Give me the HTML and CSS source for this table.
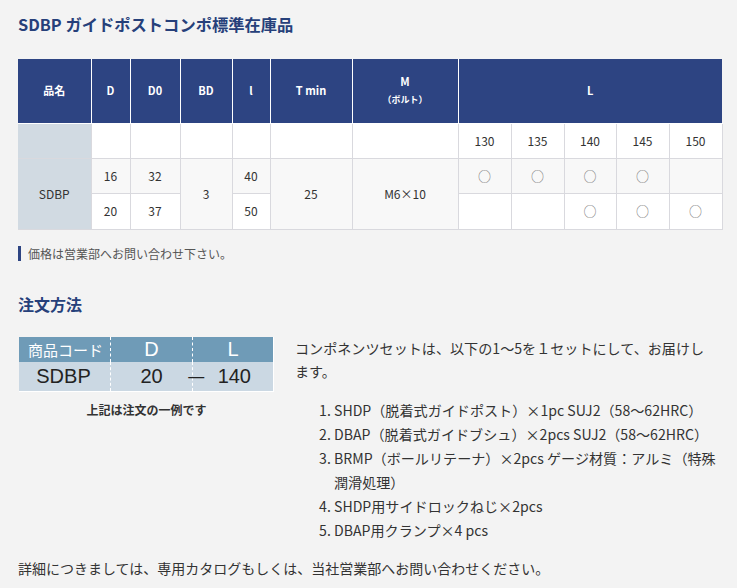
FILE: index.html
```html
<!DOCTYPE html>
<html lang="ja">
<head>
<meta charset="utf-8">
<link rel="stylesheet" href="styles.css">
</head>
<body>
<div class="page">
  <h1 class="title">SDBP ガイドポストコンポ標準在庫品</h1>
  <table class="stock">
    <colgroup>
      <col class="c73"><col class="c39"><col class="c50"><col class="c52"><col class="c38"><col class="c82"><col class="c106">
      <col class="c53"><col class="c53"><col class="c52"><col class="c53"><col class="c53">
    </colgroup>
    <tr class="head">
      <th>品名</th><th>D</th><th>D0</th><th>BD</th><th>l</th><th>T min</th>
      <th>M<br><span class="sub">（ボルト）</span></th>
      <th colspan="5">L</th>
    </tr>
    <tr class="r2">
      <td class="name"></td><td></td><td></td><td></td><td></td><td></td><td></td>
      <td>130</td><td>135</td><td>140</td><td>145</td><td>150</td>
    </tr>
    <tr class="r3">
      <td class="name" rowspan="2">SDBP</td><td>16</td><td>32</td><td rowspan="2" class="grey">3</td><td>40</td>
      <td rowspan="2" class="grey">25</td><td rowspan="2" class="grey">M6×10</td>
      <td class="mk">○</td><td class="mk">○</td><td class="mk">○</td><td class="mk">○</td><td></td>
    </tr>
    <tr class="r4">
      <td>20</td><td>37</td><td>50</td>
      <td></td><td></td><td class="mk">○</td><td class="mk">○</td><td class="mk">○</td>
    </tr>
  </table>
  <p class="note">価格は営業部へお問い合わせ下さい。</p>

  <h2 class="heading">注文方法</h2>
  <div class="order">
    <div class="order-left">
      <div class="codebox">
        <div class="cb-row cb-head">
          <div class="cb-cell cb-c1 jp">商品コード</div>
          <div class="cb-cell cb-c2">D</div>
          <div class="cb-cell cb-c3">L</div>
        </div>
        <div class="cb-row cb-body">
          <div class="cb-cell cb-c1">SDBP</div>
          <div class="cb-cell cb-c2">20</div>
          <div class="cb-cell cb-c3"><span class="dash">—</span><span class="len">140</span></div>
        </div>
      </div>
      <p class="caption">上記は注文の一例です</p>
    </div>
    <div class="order-right">
      <p class="lead">コンポネンツセットは、以下の1〜5を１セットにして、お届けします。</p>
      <ol class="items">
        <li>SHDP（脱着式ガイドポスト）×1pc SUJ2（58〜62HRC）</li>
        <li>DBAP（脱着式ガイドブシュ）×2pcs SUJ2（58〜62HRC）</li>
        <li>BRMP（ボールリテーナ）×2pcs ゲージ材質：アルミ（特殊潤滑処理）</li>
        <li>SHDP用サイドロックねじ×2pcs</li>
        <li>DBAP用クランプ×4 pcs</li>
      </ol>
    </div>
  </div>
  <p class="footer">詳細につきましては、専用カタログもしくは、当社営業部へお問い合わせください。</p>
</div>
</body>
</html>
```
FILE: styles.css
```css
* { box-sizing: border-box; }
html, body { margin: 0; padding: 0; }
body {
  background: #f3f3f3;
  font-family: "Noto Sans CJK JP", "Noto Sans", sans-serif;
  color: #333;
}
.page {
  padding: 12px 15px 0 18px;
  width: 737px;
}
.title {
  margin: 0 0 22px;
  font-size: 16.3px;
  line-height: 25px;
  font-weight: 700;
  color: #26407a;
}
.stock {
  width: 704px;
  table-layout: fixed;
  border-collapse: collapse;
  font-size: 12px;
  color: #333;
}
.c73 { width: 73px; } .c39 { width: 39px; } .c50 { width: 50px; } .c52 { width: 52px; }
.c38 { width: 38px; } .c82 { width: 82px; } .c106 { width: 106px; } .c53 { width: 53px; }
.stock th {
  background: #2d4482;
  color: #fff;
  font-size: 11px;
  font-weight: 700;
  line-height: 17px;
  padding: 0;
  border: 1px solid #fff;
  border-top: 0;
}
.stock th:first-child { border-left: 0; }
.stock th:last-child { border-right: 0; }
.stock .sub { font-size: 9px; }
.stock .head { height: 64px; }
.stock td {
  border: 1px solid #d9d9de;
  text-align: center;
  padding: 0;
  background: #fff;
  line-height: 16px;
}
.stock .r2 { height: 35px; }
.stock .r3 { height: 35px; }
.stock .r4 { height: 36px; }
.stock .r3 td { background: #f8f8f8; }
.stock td.grey { background: #f8f8f8; }
.stock td.name { background: #d1dae2; border-left: 0; }
.stock td.mk { color: #777; font-size: 13px; }
.note {
  margin: 16px 0 0;
  border-left: 3px solid #2d4482;
  padding-left: 7px;
  font-size: 12px;
  line-height: 15px;
  color: #555;
}
.heading {
  margin: 31px 0 0;
  font-size: 16px;
  line-height: 24px;
  font-weight: 700;
  color: #26407a;
}
.order {
  display: flex;
  gap: 21px;
  margin-top: 21px;
}
.order-left {
  width: 256px;
  flex: none;
  padding-left: 1px;
}
.codebox {
  width: 255px;
  border: 1px solid #fff;
  border-top: 0;
  border-left: 0;
  font-family: "Liberation Sans", Arial, sans-serif;
}
.cb-row { display: flex; }
.cb-head { background: #6f9bb7; color: #fff; height: 25px; font-size: 20px; line-height: 25px; }
.cb-body { background: #cbd8e3; color: #222; height: 29px; font-size: 20px; line-height: 29px; }
.cb-cell { text-align: center; }
.cb-c1 { width: 91px; }
.cb-c2 { width: 82px; border-left: 1px dashed #fff; }
.cb-c3 { width: 81px; border-left: 1px dashed #fff; display: flex; justify-content: center; }
.cb-head .jp {
  font-family: "Noto Sans CJK JP", sans-serif;
  font-size: 15px;
  text-align: left;
  padding-left: 9px;
}
.cb-body .cb-c1 { padding-right: 2px; }
.dash { margin-left: -5px; width: 20px; font-size: 16px; }
.len { margin-left: 13px; padding-right: 22px; }
.caption {
  margin: 9px 0 0;
  text-align: center;
  font-size: 12px;
  line-height: 18px;
  font-weight: 700;
  color: #333;
}
.order-right {
  width: 427px;
  font-size: 14.1px;
  line-height: 24px;
}
.lead { margin: 0; padding-right: 14px; line-height: 23px; }
.items {
  margin: 15px 0 0;
  padding-left: 39px;
}
.footer {
  margin: 14px 0 0;
  font-size: 14px;
  line-height: 24px;
}
```
